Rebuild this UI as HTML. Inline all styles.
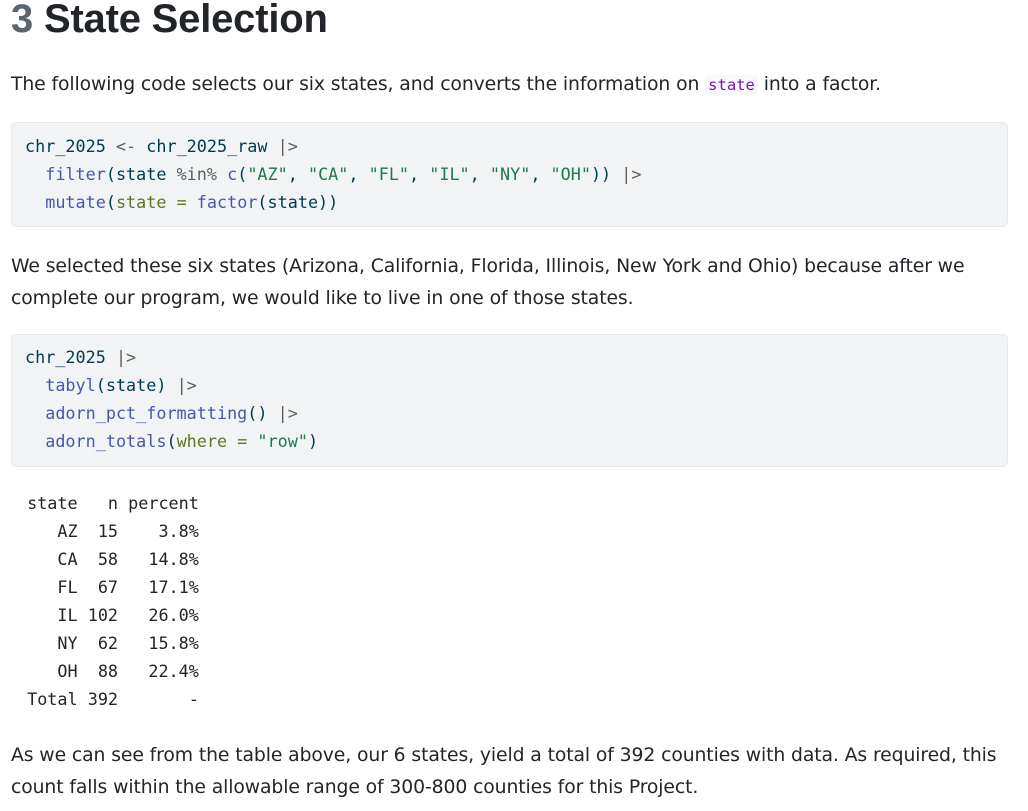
<!DOCTYPE html>
<html><head><meta charset="utf-8"><style>
body{margin:0;background:#fff;color:#212529;font-family:"Liberation Sans",sans-serif;width:1028px;height:811px;overflow:hidden;position:relative}
.a{position:absolute;left:11px;white-space:nowrap}
h2{position:absolute;left:11px;top:-3px;margin:0;font-size:40px;font-weight:bold;letter-spacing:-0.2px}
h2 span{color:#5a6570;font-weight:bold}
p{margin:0;font-family:"DejaVu Sans",sans-serif;font-size:18.8px;line-height:32px;letter-spacing:-0.1px}
.ic{font-family:"DejaVu Sans Mono",monospace;color:#7d12ba;background:#f8f9fa;font-size:15.5px;padding:1px 3px;border-radius:3px;letter-spacing:0}
.cb{position:absolute;left:11px;width:997px;background:#f1f3f5;border:1px solid #e6e9ec;border-radius:5px;box-sizing:border-box}
pre{margin:0;font-family:"DejaVu Sans Mono",monospace;font-size:16.8px;line-height:28px;color:#003b4f;position:absolute;left:13px}
.f{color:#4758ab}.s{color:#20794d}.o{color:#5e5e5e}.g{color:#657422}
</style></head><body>
<h2><span>3</span> State Selection</h2>
<p class="a" style="top:69px">The following code selects our six states, and converts the information on <span class="ic">state</span> into a factor.</p>
<div class="cb" style="top:122px;height:105px"><pre style="top:9px">chr_2025 <span class="o">&lt;-</span> chr_2025_raw <span class="o">|&gt;</span>
  <span class="f">filter</span>(state <span class="o">%in%</span> <span class="f">c</span>(<span class="s">"AZ"</span>, <span class="s">"CA"</span>, <span class="s">"FL"</span>, <span class="s">"IL"</span>, <span class="s">"NY"</span>, <span class="s">"OH"</span>)) <span class="o">|&gt;</span>
  <span class="f">mutate</span>(<span class="g">state =</span> <span class="f">factor</span>(state))</pre></div>
<p class="a" style="top:251px">We selected these six states (Arizona, California, Florida, Illinois, New York and Ohio) because after we<br>complete our program, we would like to live in one of those states.</p>
<div class="cb" style="top:334px;height:133px"><pre style="top:8px">chr_2025 <span class="o">|&gt;</span>
  <span class="f">tabyl</span>(state) <span class="o">|&gt;</span>
  <span class="f">adorn_pct_formatting</span>() <span class="o">|&gt;</span>
  <span class="f">adorn_totals</span>(<span class="g">where =</span> <span class="s">"row"</span>)</pre></div>
<pre style="top:489px;left:17px;color:#212529"> state   n percent
    AZ  15    3.8%
    CA  58   14.8%
    FL  67   17.1%
    IL 102   26.0%
    NY  62   15.8%
    OH  88   22.4%
 Total 392       -</pre>
<p class="a" style="top:740px">As we can see from the table above, our 6 states, yield a total of 392 counties with data. As required, this<br>count falls within the allowable range of 300-800 counties for this Project.</p>
</body></html>
